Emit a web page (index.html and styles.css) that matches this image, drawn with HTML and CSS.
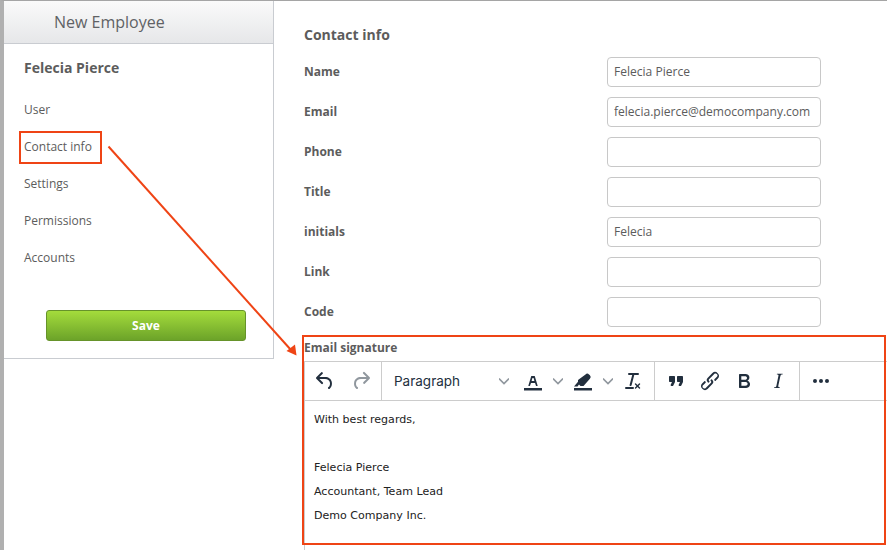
FILE: index.html
```html
<!DOCTYPE html>
<html lang="en">
<head>
<meta charset="utf-8">
<title>New Employee</title>
<link rel="stylesheet" href="styles.css">
</head>
<body>
<div class="app">
  <aside class="sidebar">
    <header class="sidebar-head">New Employee</header>
    <h2 class="person">Felecia Pierce</h2>
    <nav class="nav">
      <a>User</a>
      <a>Contact info</a>
      <a>Settings</a>
      <a>Permissions</a>
      <a>Accounts</a>
    </nav>
    <button class="save">Save</button>
  </aside>
  <main class="main">
    <h1 class="title">Contact info</h1>
    <form class="form">
      <label class="row"><span>Name</span><input value="Felecia Pierce"></label>
      <label class="row"><span>Email</span><input value="felecia.pierce@democompany.com"></label>
      <label class="row"><span>Phone</span><input></label>
      <label class="row"><span>Title</span><input></label>
      <label class="row"><span>initials</span><input value="Felecia"></label>
      <label class="row"><span>Link</span><input></label>
      <label class="row"><span>Code</span><input></label>
    </form>
    <div class="sig-label">Email signature</div>
    <section class="editor">
      <div class="toolbar">
        <div class="group g1">
          <button class="tb"><svg viewBox="0 0 24 24"><path d="M6.4 8H12c3.7 0 6.2 2 6.8 5.1.6 2.7-.4 5.6-2.3 6.8a1 1 0 0 1-1-1.8c1.1-.6 1.8-2.7 1.4-4.6-.5-2.1-2.1-3.5-4.9-3.5H6.4l3.3 3.3a1 1 0 1 1-1.4 1.4l-5-5a1 1 0 0 1 0-1.4l5-5a1 1 0 0 1 1.4 1.4L6.4 8z"/></svg></button>
          <button class="tb off"><svg viewBox="0 0 24 24"><path d="M17.6 10H12c-2.8 0-4.4 1.4-4.9 3.5-.4 2 .3 4 1.4 4.6a1 1 0 1 1-1 1.8c-2-1.2-2.9-4.1-2.3-6.8.6-3 3-5.1 6.8-5.1h5.6l-3.3-3.3a1 1 0 1 1 1.4-1.4l5 5a1 1 0 0 1 0 1.4l-5 5a1 1 0 0 1-1.4-1.4l3.3-3.3z"/></svg></button>
        </div>
        <div class="group g2">
          <div class="select"><span>Paragraph</span><svg class="chev" viewBox="0 0 10 10"><path d="M0 2.500l5 5 5-5"/></svg></div>
          <button class="tb split"><svg viewBox="0 0 24 24"><path d="M3 19h18v2.500H3z"/><path d="M8.700 17h-.8a.5.5 0 0 1-.5-.6l2.700-9c.1-.3.3-.4.5-.4h2.800c.2 0 .4.1.5.4l2.700 9a.5.5 0 0 1-.5.6h-.8a.5.5 0 0 1-.4-.4l-.7-2.200c0-.3-.3-.4-.5-.4h-3.400c-.2 0-.4.1-.5.4l-.7 2.200c0 .3-.2.4-.4.4zm2.600-7.600l-.6 2a.5.5 0 0 0 .5.6h1.600a.5.5 0 0 0 .5-.6l-.6-2c0-.3-.3-.4-.5-.4h-.4c-.2 0-.4.1-.5.4z"/></svg><svg class="chev" viewBox="0 0 10 10"><path d="M0 2.500l5 5 5-5"/></svg></button>
          <button class="tb split"><svg viewBox="0 0 24 24"><path d="M3 19h18v2.500H3z"/><path d="M14.500 5.400a2.500 2.500 0 0 1 3.500 0l.9.9a2.500 2.500 0 0 1 0 3.500l-6.400 7.200H9.500L8 15.500 6.500 17.500H3l4-4.800v-1.700z"/></svg><svg class="chev" viewBox="0 0 10 10"><path d="M0 2.500l5 5 5-5"/></svg></button>
          <button class="tb clear"><svg viewBox="0 0 24 24"><path d="M13.200 6a1 1 0 0 1 0 .2l-2.600 10a1 1 0 0 1-1 .8h-.2a.8.8 0 0 1-.8-1l2.600-10H8a1 1 0 1 1 0-2h9a1 1 0 0 1 0 2h-3.800zM5 18h7a1 1 0 0 1 0 2H5a1 1 0 0 1 0-2zm13 1.500L16.500 18 15 19.500a.7.7 0 0 1-1-1l1.500-1.500-1.500-1.500a.7.7 0 0 1 1-1l1.500 1.500 1.500-1.500a.7.7 0 0 1 1 1L17.500 17l1.500 1.500a.7.7 0 0 1-1 1z"/></svg></button>
        </div>
        <div class="group g3">
          <button class="tb"><svg viewBox="0 0 24 24"><path d="M7.500 17h.9c.4 0 .7-.2.9-.6L11 13V8c0-.6-.4-1-1-1H6c-.6 0-1 .4-1 1v4c0 .6.4 1 1 1h2l-1.300 2.700a1 1 0 0 0 .8 1.300zm8 0h.9c.4 0 .7-.2.9-.6L19 13V8c0-.6-.4-1-1-1h-4c-.6 0-1 .4-1 1v4c0 .6.4 1 1 1h2l-1.300 2.700a1 1 0 0 0 .8 1.300z"/></svg></button>
          <button class="tb"><svg viewBox="0 0 24 24"><path d="M6.200 12.300a1 1 0 0 1 1.400 1.400l-2 2a2 2 0 1 0 2.600 2.800l4.800-4.800a1 1 0 0 0 0-1.400 1 1 0 1 1 1.400-1.300 2.900 2.900 0 0 1 0 4L9.600 20a3.900 3.900 0 0 1-5.500-5.500l2-2zm11.600-.6a1 1 0 0 1-1.400-1.400l2-2a2 2 0 1 0-2.600-2.800L11 10.300a1 1 0 0 0 0 1.400A1 1 0 1 1 9.600 13a2.900 2.900 0 0 1 0-4L14.400 4a3.900 3.900 0 0 1 5.500 5.500l-2 2z"/></svg></button>
          <button class="tb"><svg viewBox="0 0 24 24"><path d="M7.800 19c-.3 0-.5 0-.6-.2l-.2-.5V5.700c0-.2 0-.4.2-.5l.6-.2h5c1.500 0 2.700.3 3.500 1 .7.600 1.100 1.400 1.100 2.500a3 3 0 0 1-.6 1.900c-.4.6-1 1-1.600 1.200.4.1.9.3 1.300.6s.8.7 1 1.200c.4.4.5 1 .5 1.600 0 1.300-.4 2.300-1.300 3-.8.7-2.100 1-3.800 1H7.800zm5-8.300c.6 0 1.200-.1 1.600-.5.4-.3.6-.7.6-1.300 0-1.100-.8-1.700-2.300-1.700H9.300v3.500h3.400zm.5 6c.7 0 1.300-.1 1.700-.4.4-.4.6-.9.6-1.500s-.2-1-.7-1.400c-.4-.3-1-.4-2-.4H9.400v3.800h4z"/></svg></button>
          <button class="tb"><svg viewBox="0 0 24 24"><path d="M16.700 4.700l-.1.9h-.3c-.6 0-1 0-1.400.3-.3.3-.4.6-.5 1.100l-2.100 9.800v.6c0 .5.4.8 1.400.8h.2l-.2.8H8l.2-.8h.2c1.100 0 1.800-.5 2-1.500l2-9.800.1-.5c0-.6-.4-.8-1.400-.8h-.3l.2-.9h5.800z"/></svg></button>
        </div>
        <div class="group g4">
          <button class="tb"><svg viewBox="0 0 24 24"><path d="M6 10a2 2 0 0 0-2 2c0 1.100.9 2 2 2a2 2 0 0 0 2-2 2 2 0 0 0-2-2zm12 0a2 2 0 0 0-2 2c0 1.100.9 2 2 2a2 2 0 0 0 2-2 2 2 0 0 0-2-2zm-6 0a2 2 0 0 0-2 2c0 1.100.9 2 2 2a2 2 0 0 0 2-2 2 2 0 0 0-2-2z"/></svg></button>
        </div>
      </div>
      <div class="content">
        <p>With best regards,</p>
        <p>&nbsp;</p>
        <p>Felecia Pierce</p>
        <p>Accountant, Team Lead</p>
        <p>Demo Company Inc.</p>
      </div>
    </section>
  </main>
</div>
<div class="mark mark-nav"></div>
<div class="mark mark-editor"></div>
<svg class="arrow" viewBox="0 0 887 550"><path class="arrow-line" d="M108.500 146.500 291 350"/><path class="arrow-head" d="M296.500 355.500 286.500 351 295 344.500z"/></svg>
</body>
</html>
```
FILE: styles.css
```css
* { box-sizing: border-box; }
html, body { margin: 0; height: 100%; background: #fff; overflow: hidden; }
body { font-family: "Open Sans", sans-serif; color: #5c5c5c; }
.app { display: flex; align-items: flex-start; height: 550px; border-top: 1px solid #a5a5a5; border-left: 4px solid #b0b0b0; }
.sidebar { width: 270px; height: 358px; flex: none; border-right: 1px solid #c9ccd1; border-bottom: 1px solid #c9ccd1; display: flex; flex-direction: column; }
.sidebar-head { height: 43px; flex: none; padding-left: 50px; font-size: 16px; line-height: 42px; color: #5f6265; background: linear-gradient(#fafafa, #e6e7e9); border-bottom: 1px solid #c9ccd1; }
.person { margin: 14px 0 0 20px; font-size: 14px; line-height: 20px; font-weight: 700; color: #5c5c5c; }
.nav { display: flex; flex-direction: column; margin: 13px 0 0 20px; }
.nav a { height: 37px; font-size: 12px; line-height: 37px; color: #5c5c5c; }
.save { width: 200px; height: 31px; margin: 34px 0 0 42px; padding: 0 0 1px; font: 700 12px "Open Sans", sans-serif; color: #fff; background: linear-gradient(#a4dc3c, #6ca329); border: 1px solid #66932a; border-radius: 3px; }
.main { flex: 1; min-width: 0; padding-left: 30px; }
.title { margin: 24px 0 0; font-size: 14px; line-height: 20px; font-weight: 700; color: #5c5c5c; }
.form { display: flex; flex-direction: column; gap: 10px; margin-top: 12px; }
.row { display: flex; align-items: center; height: 30px; font-size: 12px; font-weight: 700; color: #5c5c5c; }
.row span { width: 303px; flex: none; padding-bottom: 2px; }
.row input { width: 214px; height: 30px; padding: 0 6px 2px; font: 400 12.060px "Open Sans", sans-serif; color: #5c5c5c; background: #fff; border: 1px solid #c8c8c8; border-radius: 4px; outline: none; }
.sig-label { margin-top: 11px; font-size: 12px; line-height: 20px; font-weight: 700; color: #5c5c5c; }
.editor { margin-top: 3px; height: 200px; border-left: 1px solid #ccc; }
.toolbar { display: flex; height: 40px; border-top: 1px solid #ccc; border-bottom: 1px solid #ccc; }
.group { display: flex; align-items: center; height: 38px; border-right: 1px solid #ccc; flex: none; }
.g1 { width: 77px; padding-left: 3px; gap: 2px; }
.g2 { width: 273px; padding-left: 12px; }
.g3 { width: 145px; padding-left: 4px; }
.g4 { flex: 1; padding-left: 4px; border-right: 0; }
.tb { display: flex; align-items: center; justify-content: center; width: 34px; height: 34px; padding: 0; background: none; border: 0; }
.tb svg { width: 24px; height: 24px; fill: #222f3e; flex: none; }
.tb.off svg { fill: rgba(34, 47, 62, .5); }
.select { display: flex; align-items: center; width: 127px; padding-right: 12px; font: 400 13.500px Inter, sans-serif; color: #222f3e; }
.select span { flex: 1; }
.tb svg.chev, .chev { width: 10px; height: 10px; fill: none; stroke: rgba(34, 47, 62, .5); stroke-width: 1.6; }
.tb.split { width: 50px; gap: 8px; justify-content: flex-start; }
.tb.clear { width: 24px; }
.content { padding: 7px 0 0 9px; font: 400 11.050px/24px "DejaVu Sans", Verdana, sans-serif; color: #222; }
.content p { margin: 0; }
.mark { position: absolute; border: 2px solid #ef4415; pointer-events: none; }
.mark-nav { left: 19px; top: 131px; width: 83px; height: 33px; }
.mark-editor { left: 302px; top: 335px; width: 584px; height: 210px; }
.arrow { position: absolute; left: 0; top: 0; width: 887px; height: 550px; pointer-events: none; }
.arrow-line { fill: none; stroke: #ef4415; stroke-width: 2; }
.arrow-head { fill: #ef4415; }
```
